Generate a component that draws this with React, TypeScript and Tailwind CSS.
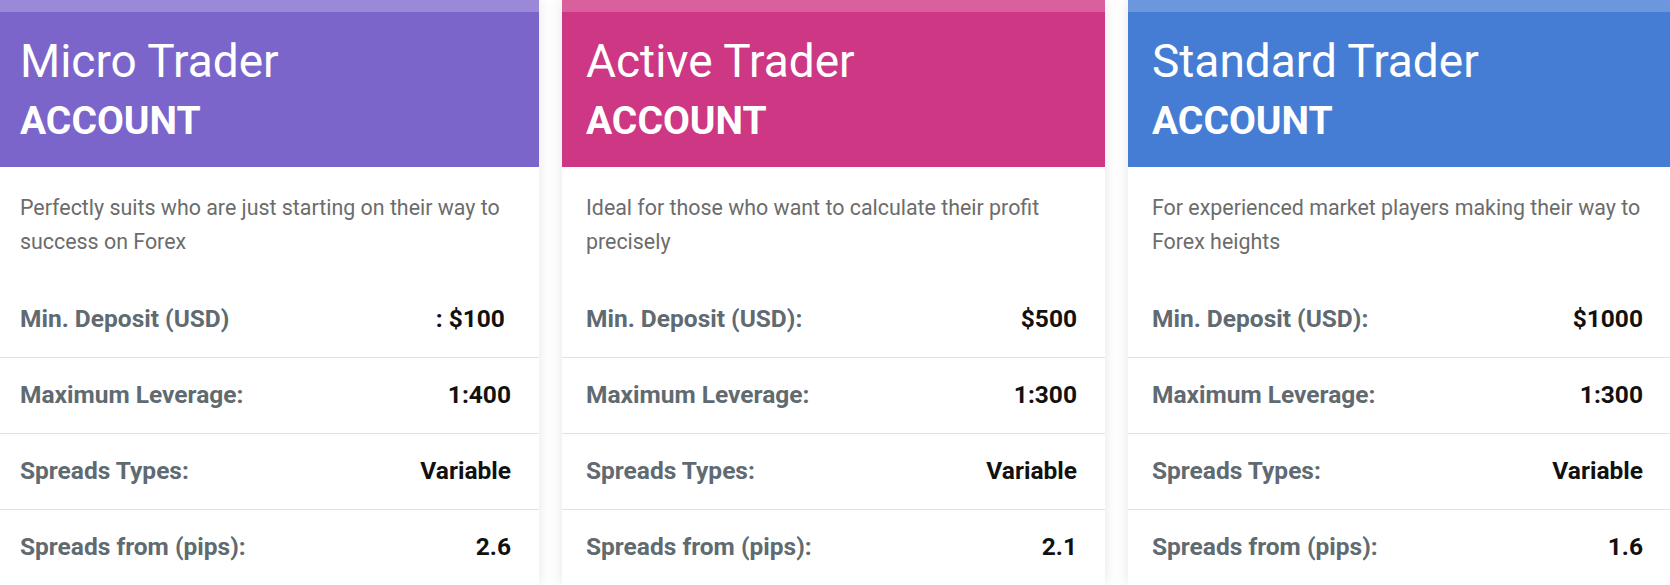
import React from "react";

type Plan = {
  name: string;
  desc: string;
  strip: string;
  head: string;
  rows: [string, string][];
};

const plans: Plan[] = [
  {
    name: "Micro Trader",
    desc: "Perfectly suits who are just starting on their way to success on Forex",
    strip: "bg-[#9a88d8]",
    head: "bg-[#7b65cb]",
    rows: [
      ["Min. Deposit (USD)", ": $100\u00a0"],
      ["Maximum Leverage:", "1:400"],
      ["Spreads Types:", "Variable"],
      ["Spreads from (pips):", "2.6"],
    ],
  },
  {
    name: "Active Trader",
    desc: "Ideal for those who want to calculate their profit precisely",
    strip: "bg-[#d9609d]",
    head: "bg-[#cd3783]",
    rows: [
      ["Min. Deposit (USD):", "$500"],
      ["Maximum Leverage:", "1:300"],
      ["Spreads Types:", "Variable"],
      ["Spreads from (pips):", "2.1"],
    ],
  },
  {
    name: "Standard Trader",
    desc: "For experienced market players making their way to Forex heights",
    strip: "bg-[#6c97df]",
    head: "bg-[#467dd4]",
    rows: [
      ["Min. Deposit (USD):", "$1000"],
      ["Maximum Leverage:", "1:300"],
      ["Spreads Types:", "Variable"],
      ["Spreads from (pips):", "1.6"],
    ],
  },
];

const Card = ({ plan }: { plan: Plan }) => {
  return (
    <div className="w-[543px] shrink-0 bg-white shadow-[0_0_14px_rgba(0,0,0,0.1)]">
      <div className={`h-[12px] ${plan.strip}`}></div>
      <div className={`h-[155px] px-6 pt-[22px] text-white ${plan.head}`}>
        <h2 className="text-[46px] leading-[54px] font-normal">{plan.name}</h2>
        <p className="mt-[8px] text-[39px] leading-[50px] font-bold">ACCOUNT</p>
      </div>
      <p className="pl-6 pr-[14px] pt-[24px] pb-[22px] text-[21.4px] leading-[34px] text-[#6c6c6c]">
        {plan.desc}
      </p>
      {plan.rows.map(([label, value], i) => (
        <div
          key={label}
          className={`flex h-[76px] items-center justify-between pl-6 pr-[28px] ${
            i > 0 ? "border-t border-[#e2e2e2]" : ""
          }`}
        >
          <span className="text-[24.5px] font-bold text-[#5f6a71]">{label}</span>
          <span className="whitespace-pre text-[24.5px] font-bold text-[#111]">{value}</span>
        </div>
      ))}
    </div>
  );
};

const App = () => {
  return (
    <div className="h-[585px] w-[1670px] overflow-hidden bg-white font-['Roboto',sans-serif]">
      <div className="ml-[-4px] flex gap-[23px]">
        {plans.map((p) => (
          <Card key={p.name} plan={p} />
        ))}
      </div>
    </div>
  );
};

export default App;
